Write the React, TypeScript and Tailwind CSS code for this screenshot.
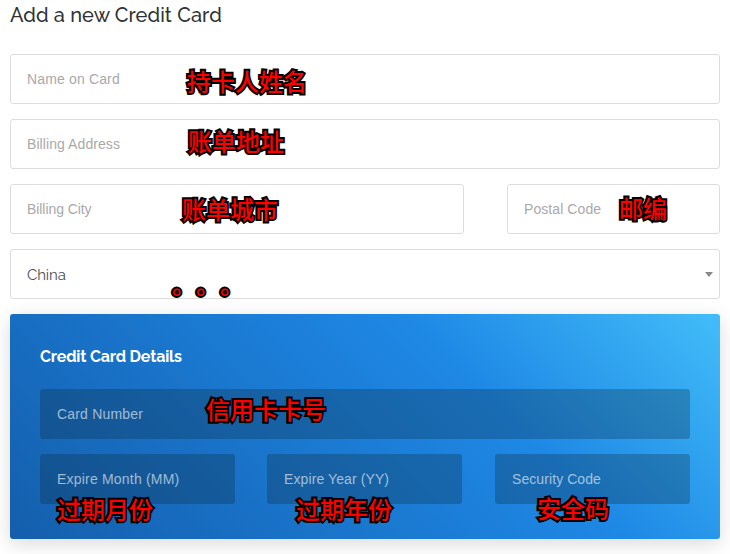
import type { ReactNode } from "react";

/** Outlined red annotation laid over a field. */
function Note({ children, className }: { children: ReactNode; className: string }) {
  return (
    <span
      className={`pointer-events-none absolute z-10 whitespace-nowrap font-['Noto_Sans_CJK_SC',sans-serif] text-[24px] leading-[24px] font-medium tracking-normal text-[#ff0000] [paint-order:stroke_fill] [text-spacing-trim:space-all] [-webkit-text-stroke:4px_#000] [stroke-linejoin:round] ${className}`}
    >
      {children}
    </span>
  );
}

function Field({ label, className = "", children }: { label: string; className?: string; children?: ReactNode }) {
  return (
    <div className={`relative flex h-[50px] items-center rounded-[3px] border border-[#dddddd] bg-white px-4 text-[14px] text-[#a9a9a9] ${className}`}>
      <span>{label}</span>
      {children}
    </div>
  );
}

function CardField({ label, className = "", children }: { label: string; className?: string; children?: ReactNode }) {
  return (
    <div className={`relative flex h-[50px] items-center rounded-[3px] bg-[#0c2c40]/30 px-[17px] text-[14px] text-white/60 ${className}`}>
      <span>{label}</span>
      {children}
    </div>
  );
}

export default function App() {
  return (
    <main className="h-[554px] w-[730px] overflow-hidden bg-white px-[10px] font-['Liberation_Sans',Arial,sans-serif]">
      <h1 className="h-[54px] pt-[1px] font-['Raleway','Lato',sans-serif] text-[20px] leading-[28px] font-medium tracking-[0.09px] text-[#2f3335]">
        Add a new Credit Card
      </h1>
      <form className="flex flex-col gap-[15px]">
        <Field label="Name on Card" className="tracking-[0.15px]">
          <Note className="left-[176px] top-[14px]">持卡人姓名</Note>
        </Field>
        <Field label="Billing Address" className="tracking-[0.08px]">
          <Note className="left-[177px] top-[9px]">账单地址</Note>
        </Field>
        <div className="flex justify-between">
          <Field label="Billing City" className="w-[454px] tracking-[-0.07px]">
            <Note className="left-[171px] top-[12px]">账单城市</Note>
          </Field>
          <Field label="Postal Code" className="w-[213px] tracking-[0.08px]">
            <Note className="left-[111px] top-[11px]">邮编</Note>
          </Field>
        </div>
        <div className="relative flex h-[50px] items-center justify-between rounded-[3px] border border-[#dddddd] bg-white pr-[6px] pl-4 text-[#4a4e52]">
          <span className="pt-[2px] font-['Raleway','Lato',sans-serif] text-[15px] tracking-[-0.1px]">China</span>
          <span className="mt-px h-0 w-0 border-x-4 border-t-[5px] border-x-transparent border-t-[#888888]" />
          <Note className="left-[161px] top-[22px]">。。。</Note>
        </div>
        <section className="h-[225px] rounded-[3px] bg-[linear-gradient(45deg,#145eac_0%,#1e88e5_66%,#42bdf9_100%)] px-[30px] pt-[31px] shadow-[0_5px_20px_rgba(0,0,0,0.15)]">
          <h2 className="h-[44px] font-['Raleway','Lato',sans-serif] text-[16px] leading-[24px] font-bold tracking-[-0.16px] text-white">
            Credit Card Details
          </h2>
          <div className="flex flex-col gap-[15px]">
            <CardField label="Card Number" className="tracking-[0.18px]">
              <Note className="left-[166px] top-[8px]">信用卡卡号</Note>
            </CardField>
            <div className="flex">
              <CardField label="Expire Month (MM)" className="mr-[32px] w-[195px] tracking-[0.2px]">
                <Note className="left-[17px] top-[43px]">过期月份</Note>
              </CardField>
              <CardField label="Expire Year (YY)" className="mr-[33px] w-[195px] tracking-[0.1px]">
                <Note className="left-[29px] top-[43px]">过期年份</Note>
              </CardField>
              <CardField label="Security Code" className="w-[195px] tracking-[0.08px]">
                <Note className="left-[42px] top-[42px]">安全码</Note>
              </CardField>
            </div>
          </div>
        </section>
      </form>
    </main>
  );
}
